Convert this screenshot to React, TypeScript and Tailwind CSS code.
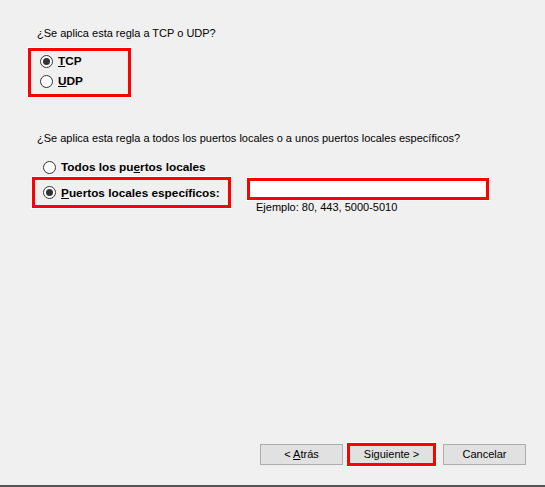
import React from "react";

function Radio({ checked }: { checked?: boolean }) {
  return (
    <span className="flex h-[13px] w-[13px] shrink-0 items-center justify-center rounded-full border border-[#333333] bg-white">
      {checked && <span className="h-[7px] w-[7px] rounded-full bg-[#333333]" />}
    </span>
  );
}

function Option({
  checked,
  children,
  className = "",
}: {
  checked?: boolean;
  children: React.ReactNode;
  className?: string;
}) {
  return (
    <label className={`flex h-5 items-center gap-[5px] ${className}`}>
      <Radio checked={checked} />
      <span className="text-[11.8px] font-bold leading-[14px]">{children}</span>
    </label>
  );
}

export default function App() {
  return (
    <div
      className="flex h-[487px] w-[545px] flex-col bg-[#f0f0f0] text-[11px] leading-[13px] text-black"
      style={{ fontFamily: '"Liberation Sans", Arial, sans-serif' }}
    >
      {/* Protocolo */}
      <p className="ml-[37px] mt-[27px]">¿Se aplica esta regla a TCP o UDP?</p>
      <div className="ml-[28px] mt-[8px] flex h-[49px] w-[103px] flex-col border-[3px] border-[#ff0000] pl-[9px] ring-1 ring-white">
        <Option checked>
          <u>T</u>CP
        </Option>
        <Option>
          <u>U</u>DP
        </Option>
      </div>

      {/* Puertos */}
      <p className="ml-[37px] mt-[35px]">
        ¿Se aplica esta regla a todos los puertos locales o a unos puertos locales específicos?
      </p>
      <Option className="ml-[43px] mt-[12px]">
        Todos los pu<u>e</u>rtos locales
      </Option>
      <div className="flex items-start">
        <div className="ml-[32px] flex h-[31px] w-[199px] items-center border-[3px] border-[#ff0000] pl-[8px] ring-1 ring-white">
          <Option checked>
            <u>P</u>uertos locales específicos:
          </Option>
        </div>
        <div className="ml-[16px] mt-[1px] flex flex-col">
          <div className="h-[22px] w-[242px] border-[3px] border-[#ff0000] bg-white ring-1 ring-white" />
          <span className="ml-[9px] mt-[1px]">Ejemplo: 80, 443, 5000-5010</span>
        </div>
      </div>

      <div className="flex-1" />

      {/* Botones */}
      <div className="mr-[19px] flex items-center justify-end">
        <button className="h-[21px] w-[83px] border border-[#adadad] bg-[#e1e1e1] text-[11px]">
          &lt; <u>A</u>trás
        </button>
        <div className="ml-[4px] flex h-[23px] w-[89px] items-center justify-center border-[3px] border-[#ff0000] bg-[#e1e1e1] ring-1 ring-white">
          Siguiente &gt;
        </div>
        <button className="ml-[7px] h-[21px] w-[83px] border border-[#adadad] bg-[#e1e1e1] text-[11px]">
          Cancelar
        </button>
      </div>
      <div className="h-[19px]" />
      <div className="h-[2px] bg-[#555555]" />
    </div>
  );
}
